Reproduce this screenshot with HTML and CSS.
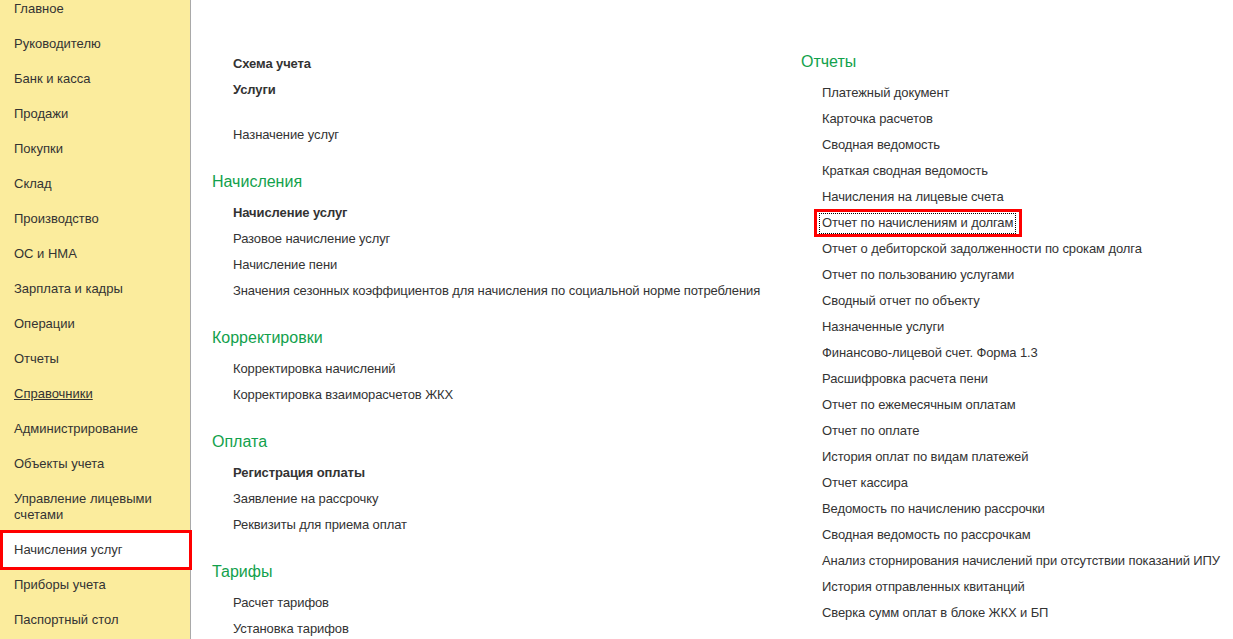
FILE: index.html
```html
<!DOCTYPE html>
<html lang="ru">
<head>
    <meta charset="UTF-8">
    <title>Начисления услуг</title>
    <link rel="stylesheet" href="styles.css">
</head>
<body>
<div class="page">
    <ul class="side">
        <li>Главное</li>
        <li>Руководителю</li>
        <li>Банк и касса</li>
        <li>Продажи</li>
        <li>Покупки</li>
        <li>Склад</li>
        <li>Производство</li>
        <li>ОС и НМА</li>
        <li>Зарплата и кадры</li>
        <li>Операции</li>
        <li>Отчеты</li>
        <li class="hover">Справочники</li>
        <li>Администрирование</li>
        <li>Объекты учета</li>
        <li>Управление лицевыми счетами</li>
        <li class="active">Начисления услуг</li>
        <li>Приборы учета</li>
        <li>Паспортный стол</li>
    </ul>

    <div class="main">
        <div class="col left">
            <ul class="group">
                <li class="bold">Схема учета</li>
                <li class="bold">Услуги</li>
            </ul>
            <ul class="group gap">
                <li>Назначение услуг</li>
            </ul>

            <h2>Начисления</h2>
            <ul class="group">
                <li class="bold">Начисление услуг</li>
                <li>Разовое начисление услуг</li>
                <li>Начисление пени</li>
                <li>Значения сезонных коэффициентов для начисления по социальной норме потребления</li>
            </ul>

            <h2>Корректировки</h2>
            <ul class="group">
                <li>Корректировка начислений</li>
                <li>Корректировка взаиморасчетов ЖКХ</li>
            </ul>

            <h2>Оплата</h2>
            <ul class="group">
                <li class="bold">Регистрация оплаты</li>
                <li>Заявление на рассрочку</li>
                <li>Реквизиты для приема оплат</li>
            </ul>

            <h2>Тарифы</h2>
            <ul class="group">
                <li>Расчет тарифов</li>
                <li>Установка тарифов</li>
            </ul>
        </div>

        <div class="col right">
            <h2 class="first">Отчеты</h2>
            <ul class="group">
                <li>Платежный документ</li>
                <li>Карточка расчетов</li>
                <li>Сводная ведомость</li>
                <li>Краткая сводная ведомость</li>
                <li>Начисления на лицевые счета</li>
                <li><span class="focus">Отчет по начислениям и долгам</span></li>
                <li>Отчет о дебиторской задолженности по срокам долга</li>
                <li>Отчет по пользованию услугами</li>
                <li>Сводный отчет по объекту</li>
                <li>Назначенные услуги</li>
                <li>Финансово-лицевой счет. Форма 1.3</li>
                <li>Расшифровка расчета пени</li>
                <li>Отчет по ежемесячным оплатам</li>
                <li>Отчет по оплате</li>
                <li>История оплат по видам платежей</li>
                <li>Отчет кассира</li>
                <li>Ведомость по начислению рассрочки</li>
                <li>Сводная ведомость по рассрочкам</li>
                <li>Анализ сторнирования начислений при отсутствии показаний ИПУ</li>
                <li>История отправленных квитанций</li>
                <li>Сверка сумм оплат в блоке ЖКХ и БП</li>
            </ul>
        </div>
    </div>
</div>
</body>
</html>
```

FILE: styles.css
```css
*{
    margin: 0;
    padding: 0;
    list-style: none;
    box-sizing: border-box;
}
html,body{
    height: 100%;
    overflow: hidden;
}
body{
    font-family: "Liberation Sans", Arial, sans-serif;
    font-size: 13px;
    color: #333;
    background: #fff;
}
.page{
    display: flex;
    height: 100%;
}

/*левое меню разделов*/
.side{
    width: 191px;
    flex-shrink: 0;
    background: #fbec9d;
    border-right: 1px solid #a9a9a9;
}
.side li{
    position: relative;
    padding: 9px 14px 10px;
    line-height: 16px;
    color: #333;
}
.side li:first-child{
    margin-top: -8px;
}
.side li.hover{
    text-decoration: underline;
}
.side li.active{
    background: #fff;
    margin-right: -1px;
}
.side li.active::after{
    content: "";
    position: absolute;
    left: 0;
    right: -1px;
    top: -3px;
    bottom: -2px;
    border: 3px solid #f00;
}

/*рабочая область*/
.main{
    flex: 1;
    display: flex;
    padding: 51px 0 0 21px;
    letter-spacing: -0.1px;
}
.col.left{
    width: 589px;
    flex-shrink: 0;
}
.col.right{
    flex: 1;
    padding-top: 1px;
}
.main h2{
    font-size: 16px;
    font-weight: normal;
    line-height: 20px;
    color: #12a14c;
    margin: 24px 0 8px;
    letter-spacing: 0;
}
.main h2.first{
    margin-top: 0;
}
.group li{
    line-height: 26px;
    height: 26px;
    padding-left: 21px;
    white-space: nowrap;
}
.group li.bold{
    font-weight: bold;
}
.group.gap{
    margin-top: 19px;
}

/*выделенный пункт отчета*/
.focus{
    position: relative;
    display: inline-block;
    line-height: 20px;
}
.focus::before{
    content: "";
    position: absolute;
    left: -3px;
    right: -3px;
    top: 0;
    bottom: -1px;
    border: 1px dotted #000;
}
.focus::after{
    content: "";
    position: absolute;
    left: -8px;
    right: -9px;
    top: -4px;
    bottom: -4px;
    border: 3px solid #f00;
}
```
